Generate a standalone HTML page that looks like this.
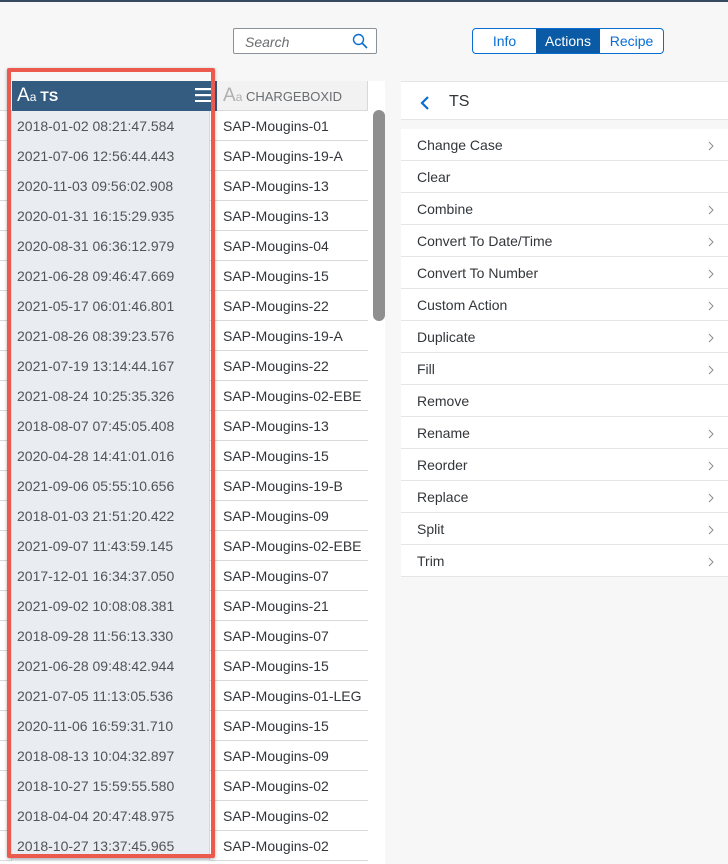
<!DOCTYPE html>
<html><head><meta charset="utf-8"><style>
*{margin:0;padding:0;box-sizing:border-box}
body{width:728px;height:864px;overflow:hidden;background:#f7f7f7;font-family:"Liberation Sans",sans-serif;position:relative;color:#32363a}
.abs{position:absolute}
.topbar{left:0;top:0;width:728px;height:2px;background:#354a5f}
.search{left:233px;top:28px;width:144px;height:26px;border:1px solid #89919a;background:#fff;border-radius:2px}
.search span{position:absolute;left:11px;top:5px;font-style:italic;color:#6a6d70;font-size:14px}
.seg{left:472px;top:28px;width:192px;height:26px;border:1px solid #0a6ed1;border-radius:4px;background:#fff;display:flex;overflow:hidden;font-size:14px}
.seg div{display:flex;align-items:center;justify-content:center;color:#0a6ed1}
.grid{left:0;top:81px;width:385px;height:783px;background:#fff}
.row{position:absolute;left:0;height:30px;width:368px;border-bottom:1px solid #d9d9d9;font-size:14px;line-height:31px}
.row .a{position:absolute;left:12px;width:198px;height:30px;background:#e9edf2;padding-left:5px;color:#515456;border-right:1px solid #d9d9d9}
.row .b{position:absolute;left:217px;padding-left:6px;color:#32363a}
.row .l{position:absolute;left:0;width:12px;height:30px;border-right:1px solid #d9d9d9}
.hdr{position:absolute;top:0;height:30px;line-height:30px;font-size:14px}
.panelhdr{left:401px;top:81px;width:327px;height:39px;background:#fff;border-top:1px solid #e5e5e5;border-bottom:1px solid #e5e5e5}
.item{position:absolute;left:401px;width:327px;height:32px;background:#fff;border-bottom:1px solid #e5e5e5;font-size:14px;line-height:33px;padding-left:16px}
.item svg{position:absolute;right:14px;top:12px}
</style></head><body>
<div class="abs topbar"></div>
<div class="abs search"><span>Search</span>
<svg style="position:absolute;right:8px;top:4px" width="16" height="16" viewBox="0 0 16 16"><circle cx="6.5" cy="6.5" r="5" fill="none" stroke="#0a6ed1" stroke-width="1.4"/><path d="M10 10L15 15" stroke="#0a6ed1" stroke-width="1.6"/></svg></div>
<div class="abs seg"><div style="width:63px">Info</div><div style="width:64px;background:#0a5aa5;color:#fff;">Actions</div><div style="width:63px">Recipe</div></div>

<div class="abs grid">
 <div class="hdr" style="left:0;width:12px;background:#f7f7f7;border-bottom:1px solid #d9d9d9"></div>
 <div class="hdr" style="left:12px;width:205px;background:#345c80;color:#fff;padding-left:5px;font-weight:bold"><span style="font-weight:normal;font-size:19px">A</span><span style="font-weight:normal;font-size:12px">a</span> TS
  <svg style="position:absolute;left:183px;top:7px" width="16" height="14"><rect y="0" width="16" height="2.2" fill="#fff"/><rect y="6" width="16" height="2.2" fill="#fff"/><rect y="12" width="16" height="2.2" fill="#fff"/></svg></div>
 <div class="hdr" style="left:217px;width:151px;background:#f2f2f2;color:#6a6d70;padding-left:6px;border-bottom:1px solid #d9d9d9;border-right:1px solid #d9d9d9;font-size:13px"><span style="color:#b0b0b0;font-size:19px">A</span><span style="color:#b0b0b0;font-size:12px">a</span> CHARGEBOXID</div>
 <div class="abs" style="left:373px;top:29px;width:12px;height:211px;background:#8f8f8f;border-radius:6px"></div>
</div>

<div id="rows"></div>
<div class="abs" style="left:7px;top:68px;width:208px;height:790px;border:4px solid #ec5a4e;border-radius:2px;box-shadow:0 1px 3px rgba(0,0,0,.3)"></div>

<div class="abs panelhdr">
<svg style="position:absolute;left:19px;top:13px" width="10" height="16"><path d="M8 2L2 8L8 14" fill="none" stroke="#0a6ed1" stroke-width="2.2"/></svg>
<span style="position:absolute;left:48px;top:11px;font-size:16px">TS</span></div>
<div id="items"></div>
<script>
var a=["2018-01-02 08:21:47.584","2021-07-06 12:56:44.443","2020-11-03 09:56:02.908","2020-01-31 16:15:29.935","2020-08-31 06:36:12.979","2021-06-28 09:46:47.669","2021-05-17 06:01:46.801","2021-08-26 08:39:23.576","2021-07-19 13:14:44.167","2021-08-24 10:25:35.326","2018-08-07 07:45:05.408","2020-04-28 14:41:01.016","2021-09-06 05:55:10.656","2018-01-03 21:51:20.422","2021-09-07 11:43:59.145","2017-12-01 16:34:37.050","2021-09-02 10:08:08.381","2018-09-28 11:56:13.330","2021-06-28 09:48:42.944","2021-07-05 11:13:05.536","2020-11-06 16:59:31.710","2018-08-13 10:04:32.897","2018-10-27 15:59:55.580","2018-04-04 20:47:48.975","2018-10-27 13:37:45.965"];
var b=["01","19-A","13","13","04","15","22","19-A","22","02-EBE","13","15","19-B","09","02-EBE","07","21","07","15","01-LEG","15","09","02","02","02"];
var h="";for(var i=0;i<a.length;i++){h+='<div class="row" style="top:'+(111+i*30)+'px"><div class="l"></div><div class="a">'+a[i]+'</div><div class="b">SAP-Mougins-'+b[i]+'</div></div>';}
document.getElementById("rows").innerHTML=h;
var it=[["Change Case",1],["Clear",0],["Combine",1],["Convert To Date/Time",1],["Convert To Number",1],["Custom Action",1],["Duplicate",1],["Fill",1],["Remove",0],["Rename",1],["Reorder",1],["Replace",1],["Split",1],["Trim",1]];
h="";for(i=0;i<it.length;i++){h+='<div class="item" style="top:'+(129+i*32)+'px">'+it[i][0]+(it[i][1]?'<svg width="6" height="10"><path d="M1 1L5 5L1 9" fill="none" stroke="#8a8d90" stroke-width="1"/></svg>':'')+'</div>';}
document.getElementById("items").innerHTML=h;
</script>
</body></html>
